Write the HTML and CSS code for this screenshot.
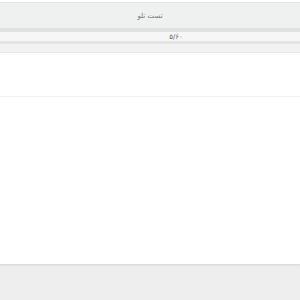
FILE: index.html
```html
<!DOCTYPE html>
<html lang="fa" dir="rtl">
<head>
  <meta charset="UTF-8" />
  <title>تست تلو</title>
  <link rel="stylesheet" href="styles.css">
</head>
<body>
  <div class="page">
    <!-- Header -->
    <div class="title-bar">تست تلو</div>
    <div class="progress">
      <span class="progress-text">۵/۶۰</span>
    </div>
    <div class="sub-bar"></div>

    <!-- Question -->
    <div class="question"></div>
    <div class="answers"></div>

    <!-- Footer -->
    <div class="footer"></div>
  </div>
</body>
</html>
```

FILE: styles.css
```css
html, body {
  margin: 0;
  height: 100%;
}

body {
  font-family: 'DejaVu Sans', 'Noto Sans', sans-serif;
  background: #ffffff;
  color: #666;
}

.page {
  display: flex;
  flex-direction: column;
  height: 300px;
  padding-top: 2px;
  box-sizing: border-box;
}

.title-bar {
  height: 25px;
  border-top: 1px solid #e2e4e4;
  background: #eff0f0;
  font-size: 7px;
  display: flex;
  align-items: center;
  justify-content: center;
  color: #777;
}

.progress {
  border-top: 4px solid #e0e1e1;
  border-bottom: 3px solid #e3e4e4;
  height: 9px;
  background: #f6f6f6;
  font-size: 7px;
  display: flex;
  align-items: center;
  justify-content: center;
}

.progress-text {
  margin-right: -52px;
  color: #666;
}

.sub-bar {
  height: 8px;
  background: #f1f2f2;
  border-bottom: 1px solid #e8e8e8;
}

.question {
  height: 43px;
  border-bottom: 1px solid #f0f0f0;
}

.answers {
  flex: 1;
  background: #ffffff;
  border-bottom: 1px solid #dcdcdc;
}

.footer {
  height: 35px;
  background: #eeeeee;
  box-shadow: inset 0 2px 2px -1px #e2e2e2;
}
```
